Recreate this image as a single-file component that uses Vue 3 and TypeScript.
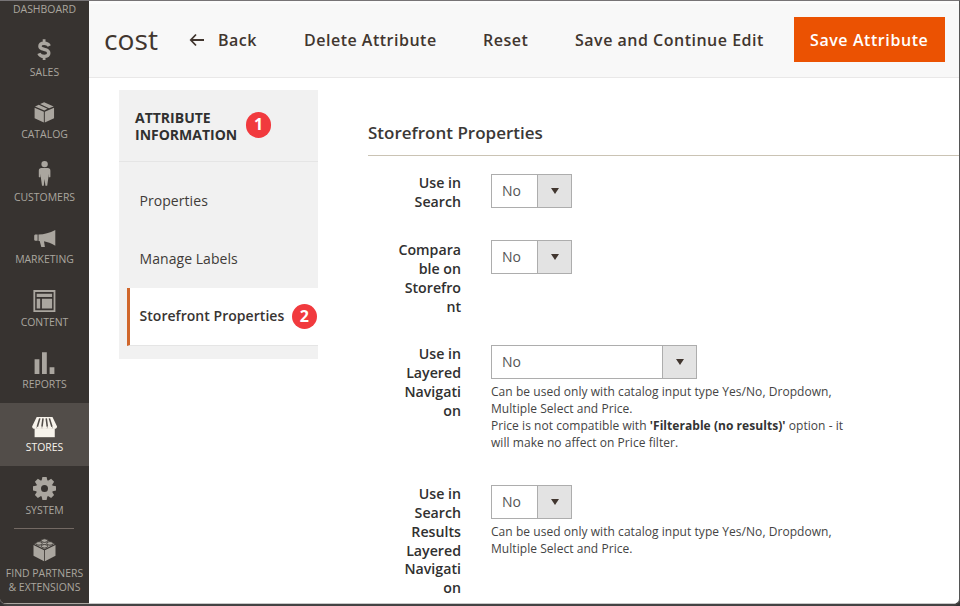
<script setup lang="ts">
interface MenuItem {
  id: string
  label: string[]
  box: string
  active?: boolean
}

interface Field {
  id: string
  label: string[]
  value: string
  wide?: boolean
  notes?: { text: string; strong?: string; after?: string }[]
}

const menu: MenuItem[] = [
  { id: 'dashboard', label: ['DASHBOARD'], box: '0 0 26 26' },
  { id: 'sales', label: ['SALES'], box: '0.9 1.9 26 26' },
  { id: 'catalog', label: ['CATALOG'], box: '0.2 1.8 27 27' },
  { id: 'customers', label: ['CUSTOMERS'], box: '0.4 3.5 26 26' },
  { id: 'marketing', label: ['MARKETING'], box: '-0.3 0.7 26 26' },
  { id: 'content', label: ['CONTENT'], box: '0.6 0.9 26 26' },
  { id: 'reports', label: ['REPORTS'], box: '0.6 1.0 26 26' },
  { id: 'stores', label: ['STORES'], box: '0.9 0.4 25 25', active: true },
  { id: 'system', label: ['SYSTEM'], box: '0.5 1.6 26 26' },
  { id: 'partners', label: ['FIND PARTNERS', '& EXTENSIONS'], box: '0.5 2.6 26 26' },
]

const teeth: number[] = [0, 45, 90, 135, 180, 225, 270, 315]

const fields: Field[] = [
  { id: 'search', label: ['Use in', 'Search'], value: 'No' },
  { id: 'comparable', label: ['Compara', 'ble on', 'Storefro', 'nt'], value: 'No' },
  {
    id: 'layered',
    label: ['Use in', 'Layered', 'Navigati', 'on'],
    value: 'No',
    wide: true,
    notes: [
      { text: 'Can be used only with catalog input type Yes/No, Dropdown,' },
      { text: 'Multiple Select and Price.' },
      { text: 'Price is not compatible with ', strong: "'Filterable (no results)'", after: ' option - it' },
      { text: 'will make no affect on Price filter.' },
    ],
  },
  {
    id: 'results',
    label: ['Use in', 'Search', 'Results', 'Layered', 'Navigati', 'on'],
    value: 'No',
    notes: [
      { text: 'Can be used only with catalog input type Yes/No, Dropdown,' },
      { text: 'Multiple Select and Price.' },
    ],
  },
]
</script>

<template>
  <div class="window">
    <nav class="menu">
      <a v-for="item in menu" :key="item.id" class="menu-item" :class="[`menu-${item.id}`, { active: item.active }]">
        <svg class="icon" :viewBox="item.box" fill="currentColor">
          <template v-if="item.id === 'sales'">
            <path d="M18.2 8.8C17.2 6.8 15.3 6.1 13 6.1c-2.6 0-4.2 1.1-4.2 3 0 4.5 8.9 2 8.9 6.8 0 2.2-1.9 3.4-4.6 3.4-2.4 0-4.4-.9-5.3-3.1" fill="none" stroke="currentColor" stroke-width="3.4" />
            <path d="M11.6 2.2h2.8v4h-2.8zM11.6 19h2.8v3.8h-2.8z" />
          </template>
          <template v-else-if="item.id === 'catalog'">
            <path d="M2.9 8.8 12.5 13v11.2L2.9 19.6zM23.1 8.8 13.5 13v11.2l9.6-4.6zM3.3 7.4l4-1.7 9 4.1-3.3 1.8zM8.6 5l4.2-2 9.9 4.4-4.8 1.9z" />
          </template>
          <template v-else-if="item.id === 'customers'">
            <circle cx="13" cy="3.6" r="3.2" />
            <path d="M9.8 7.6h6.4c1.6 0 2.6 1 2.6 2.6v6c0 .8-1.6.8-1.6 0v-3l-.4 3.6-1.2 8.4h-1.8l-.8-6.8-.8 6.8h-1.8l-1.2-8.4-.4-3.6v3c0 .8-1.6.8-1.6 0v-6c0-1.6 1-2.6 2.6-2.6z" />
          </template>
          <template v-else-if="item.id === 'marketing'">
            <path d="M2.7 9.3h2.6v6.2H2.7l-.8-.8v-4.6zM6.2 9.2c6 0 11-1.7 16.8-4.5v15.7c-4.3-2.5-7.6-3.7-11.3-4.4l.9 5.8H9L7.4 15.7l-1.2-.1z" />
          </template>
          <template v-else-if="item.id === 'content'">
            <path fill-rule="evenodd" d="M2 2h22v22H2zM3.8 3.8v18.4h18.4V3.8zM5.3 5.6h15.4v3.2H5.3zM5.3 10.6h3.5v9.8H5.3zM10.5 10.6h10.2v9.8H10.5z" />
          </template>
          <template v-else-if="item.id === 'reports'">
            <path d="M3.2 9.3H8V24H3.2zM10.6 2.2h4.8V24h-4.8zM18.2 17.2H23V24h-4.8z" />
          </template>
          <template v-else-if="item.id === 'stores'">
            <path d="M3.4 14h19.4v8.7H3.4z" />
            <path d="M5.4 3.2h15.2l4.4 9.2c0 3-4.5 3-4.5.2 0 2.8-5 2.8-5 0 0 2.8-5 2.8-5 0 0 2.8-5 2.8-5 0 0 2.8-4.5 2.8-4.5-.2z" />
            <path class="stripe" d="M8.4 4.6 6 12.6M11.5 4.6l-1 8M14.6 4.6l1 8M17.6 4.6l2.5 8" />
          </template>
          <template v-else-if="item.id === 'system'">
            <circle cx="13" cy="13" r="6" fill="none" stroke="currentColor" stroke-width="5" />
            <path v-for="angle in teeth" :key="angle" d="M10 5.6 10.9 1.5h4.2l.9 4.1z" :transform="`rotate(${angle} 13 13)`" />
          </template>
          <template v-else-if="item.id === 'partners'">
            <path d="M2 8.7 12.6 13.9v11L2 19.4zM24 8.7 13.4 13.9v11L24 19.4zM2.8 7.6 13 2.7l10.2 4.9L13 12.8z" />
            <g class="studs">
              <ellipse cx="13" cy="4.2" rx="3.2" ry="1.8" /><ellipse cx="7.5" cy="7" rx="3.2" ry="1.8" />
              <ellipse cx="18.5" cy="7" rx="3.2" ry="1.8" /><ellipse cx="13" cy="9.9" rx="3.2" ry="1.8" />
            </g>
          </template>
        </svg>
        <span v-for="line in item.label" :key="line" class="menu-label">{{ line }}</span>
      </a>
    </nav>

    <div class="page">
      <header class="toolbar">
        <h1>cost</h1>
        <button class="back">
          <svg viewBox="0 0 16 14"><path d="M7 1.5 1.8 7 7 12.5M2 7h13" /></svg>Back
        </button>
        <button class="delete">Delete Attribute</button>
        <button class="reset">Reset</button>
        <button class="continue">Save and Continue Edit</button>
        <button class="primary">Save Attribute</button>
      </header>

      <div class="body">
        <aside class="tabs">
          <div class="tabs-title">
            <strong><span>ATTRIBUTE</span><span>INFORMATION</span></strong>
            <span class="badge">1</span>
          </div>
          <a class="tab first">Properties</a>
          <a class="tab">Manage Labels</a>
          <a class="tab current">Storefront Properties<span class="badge">2</span></a>
        </aside>

        <main class="form">
          <h2>Storefront Properties</h2>
          <div v-for="field in fields" :key="field.id" class="field" :class="field.id">
            <label><span v-for="part in field.label" :key="part">{{ part }}</span></label>
            <div class="control">
              <div class="select" :class="{ wide: field.wide }">
                <span class="value">{{ field.value }}</span>
                <span class="arrow"><svg viewBox="0 0 8 6"><path d="M0 0h8L4 6z" /></svg></span>
              </div>
              <p v-if="field.notes" class="note">
                <span v-for="note in field.notes" :key="note.text">{{ note.text }}<b v-if="note.strong">{{ note.strong }}</b>{{ note.after }}</span>
              </p>
            </div>
          </div>
        </main>
      </div>
    </div>
  </div>
</template>

<style>
body { margin: 0; background: #333; overflow: hidden; }
</style>

<style scoped>
* { box-sizing: border-box; }
.window {
  display: flex;
  width: 960px;
  height: 606px;
  overflow: hidden;
  border-top: 1px solid #777476;
  border-right: 1px solid #555;
  border-bottom: 2px solid #444343;
  border-radius: 0 0 7px 7px;
  background: #fff;
  color: #41362f;
  font-family: "Open Sans", "Noto Sans", sans-serif;
}
.menu {
  flex: 0 0 89px;
  height: 603px;
  overflow: hidden;
  background: #373330;
  border-bottom: 1px solid #aaa6a0;
}
.menu-item {
  display: flex;
  flex-direction: column;
  align-items: center;
  height: 62.6px;
  padding-top: 11px;
  color: #aaa69f;
  font-size: 10.45px;
  line-height: 14px;
}
.menu-dashboard { margin-top: -36.1px; }
.menu-item.active { background: #524d49; color: #f7f3eb; }
.menu-partners {
  position: relative;
  height: 76px;
}
.menu-partners .icon { margin-bottom: .6px; }
.menu-partners::before {
  content: "";
  position: absolute;
  top: 0;
  left: 14px;
  width: 60px;
  height: 1px;
  background: #736963;
}
.icon { width: 26px; height: 26px; flex: none; overflow: visible; }
.menu-label { white-space: nowrap; }
.stripe { fill: none; stroke: #524d49; stroke-width: 1.5; }
.studs { stroke: #373330; stroke-width: .9; }
.page { flex: 1; min-width: 0; height: 603px; overflow: hidden; border-bottom: 1px solid #c8c8c8; }
.toolbar {
  display: flex;
  align-items: center;
  height: 77px;
  padding: 0 14px 2px 15px;
  border-top: 3px solid #fcfcfc;
  border-bottom: 1px solid #e9e8e8;
  background: #f8f8f8;
}
h1 { flex: 0 0 85px; margin: 0 0 1px; font-size: 28.2px; font-weight: 400; line-height: 38px; }
button {
  margin: 0;
  padding: 0;
  border: 0;
  background: none;
  color: #41362f;
  font: 600 16px/22px "Open Sans", "Noto Sans", sans-serif;
  letter-spacing: .5px;
  text-align: left;
  white-space: nowrap;
}
.back { display: flex; align-items: center; flex: 0 0 115px; }
.back svg { width: 16px; height: 14px; margin-right: 13px; fill: none; stroke: #41362f; stroke-width: 1.8; }
.delete { flex: 0 0 179px; }
.reset { flex: 0 0 92px; }
.continue { flex: 0 0 219px; }
.primary { flex: 0 0 151px; height: 45px; padding: 0 0 0 16px; background: #eb5202; color: #fff; letter-spacing: .58px; }
.body { display: flex; align-items: flex-start; padding: 12px 0 0 30px; }
.tabs { flex: 0 0 199px; height: 269px; background: #f1f1f1; }
.tabs-title {
  display: flex;
  height: 72px;
  padding: 19px 0 0 16px;
  border-bottom: 1px solid #e5e5e5;
  font-size: 14px;
  line-height: 17px;
  color: #303030;
}
.tabs-title strong { display: flex; flex-direction: column; }
.tabs-title .badge { margin: 3px 0 0 8.5px; }
.tab {
  display: flex;
  align-items: center;
  height: 58px;
  padding: 0 0 2px 20.5px;
  font-size: 14px;
  letter-spacing: .06px;
  color: #403b38;
  white-space: nowrap;
}
.tab.first { margin-top: 10px; }
.tab.current {
  margin-left: 8px;
  padding: 0 0 2px 9.5px;
  border-left: 3px solid #d0672c;
  border-bottom: 1px solid #e5e5e5;
  background: #fff;
  color: #383432;
  font-weight: 600;
  font-size: 14px;
  letter-spacing: .04px;
}
.current .badge { margin: 2px 1px 0 auto; }
.badge {
  flex: none;
  width: 25.5px;
  height: 25.5px;
  border-radius: 50%;
  background: #f13a3e;
  color: #fff;
  font: 700 16px/25px "Open Sans", "Noto Sans", sans-serif;
  text-align: center;
}
.form { flex: 1; margin-left: 50px; }
h2 {
  height: 66px;
  margin: 0 0 18px;
  padding-top: 31px;
  border-bottom: 1px solid #cac3b4;
  font-size: 17px;
  font-weight: 600;
  line-height: 24px;
  color: #3b3836;
}
.field { display: flex; align-items: flex-start; height: 67px; }
.field.comparable { height: 104.2px; }
.field.layered { height: 139.8px; }
.field.results { height: 118px; }
label { display: flex; flex-direction: column; width: 93px; text-align: right; font-size: 14.2px; font-weight: 600; line-height: 18.85px; color: #303030; }
.control { margin-left: 30px; }
.select { display: flex; width: 81px; height: 34px; margin-bottom: 5.2px; border: 1px solid #adadad; background: #fff; }
.field.comparable .select { margin-top: -1px; }
.select.wide { width: 206px; }
.value { flex: 1; padding-left: 10px; font-size: 14px; line-height: 31px; color: #555; }
.arrow { display: flex; align-items: center; justify-content: center; width: 34px; border-left: 1px solid #adadad; background: #e3e3e3; }
.arrow svg { width: 8px; height: 6px; fill: #41362f; }
.note { margin: 0; font-size: 12px; line-height: 16.8px; letter-spacing: .05px; color: #444; white-space: pre; }
.note > span { display: block; }
.note b { color: #333; }
</style>
